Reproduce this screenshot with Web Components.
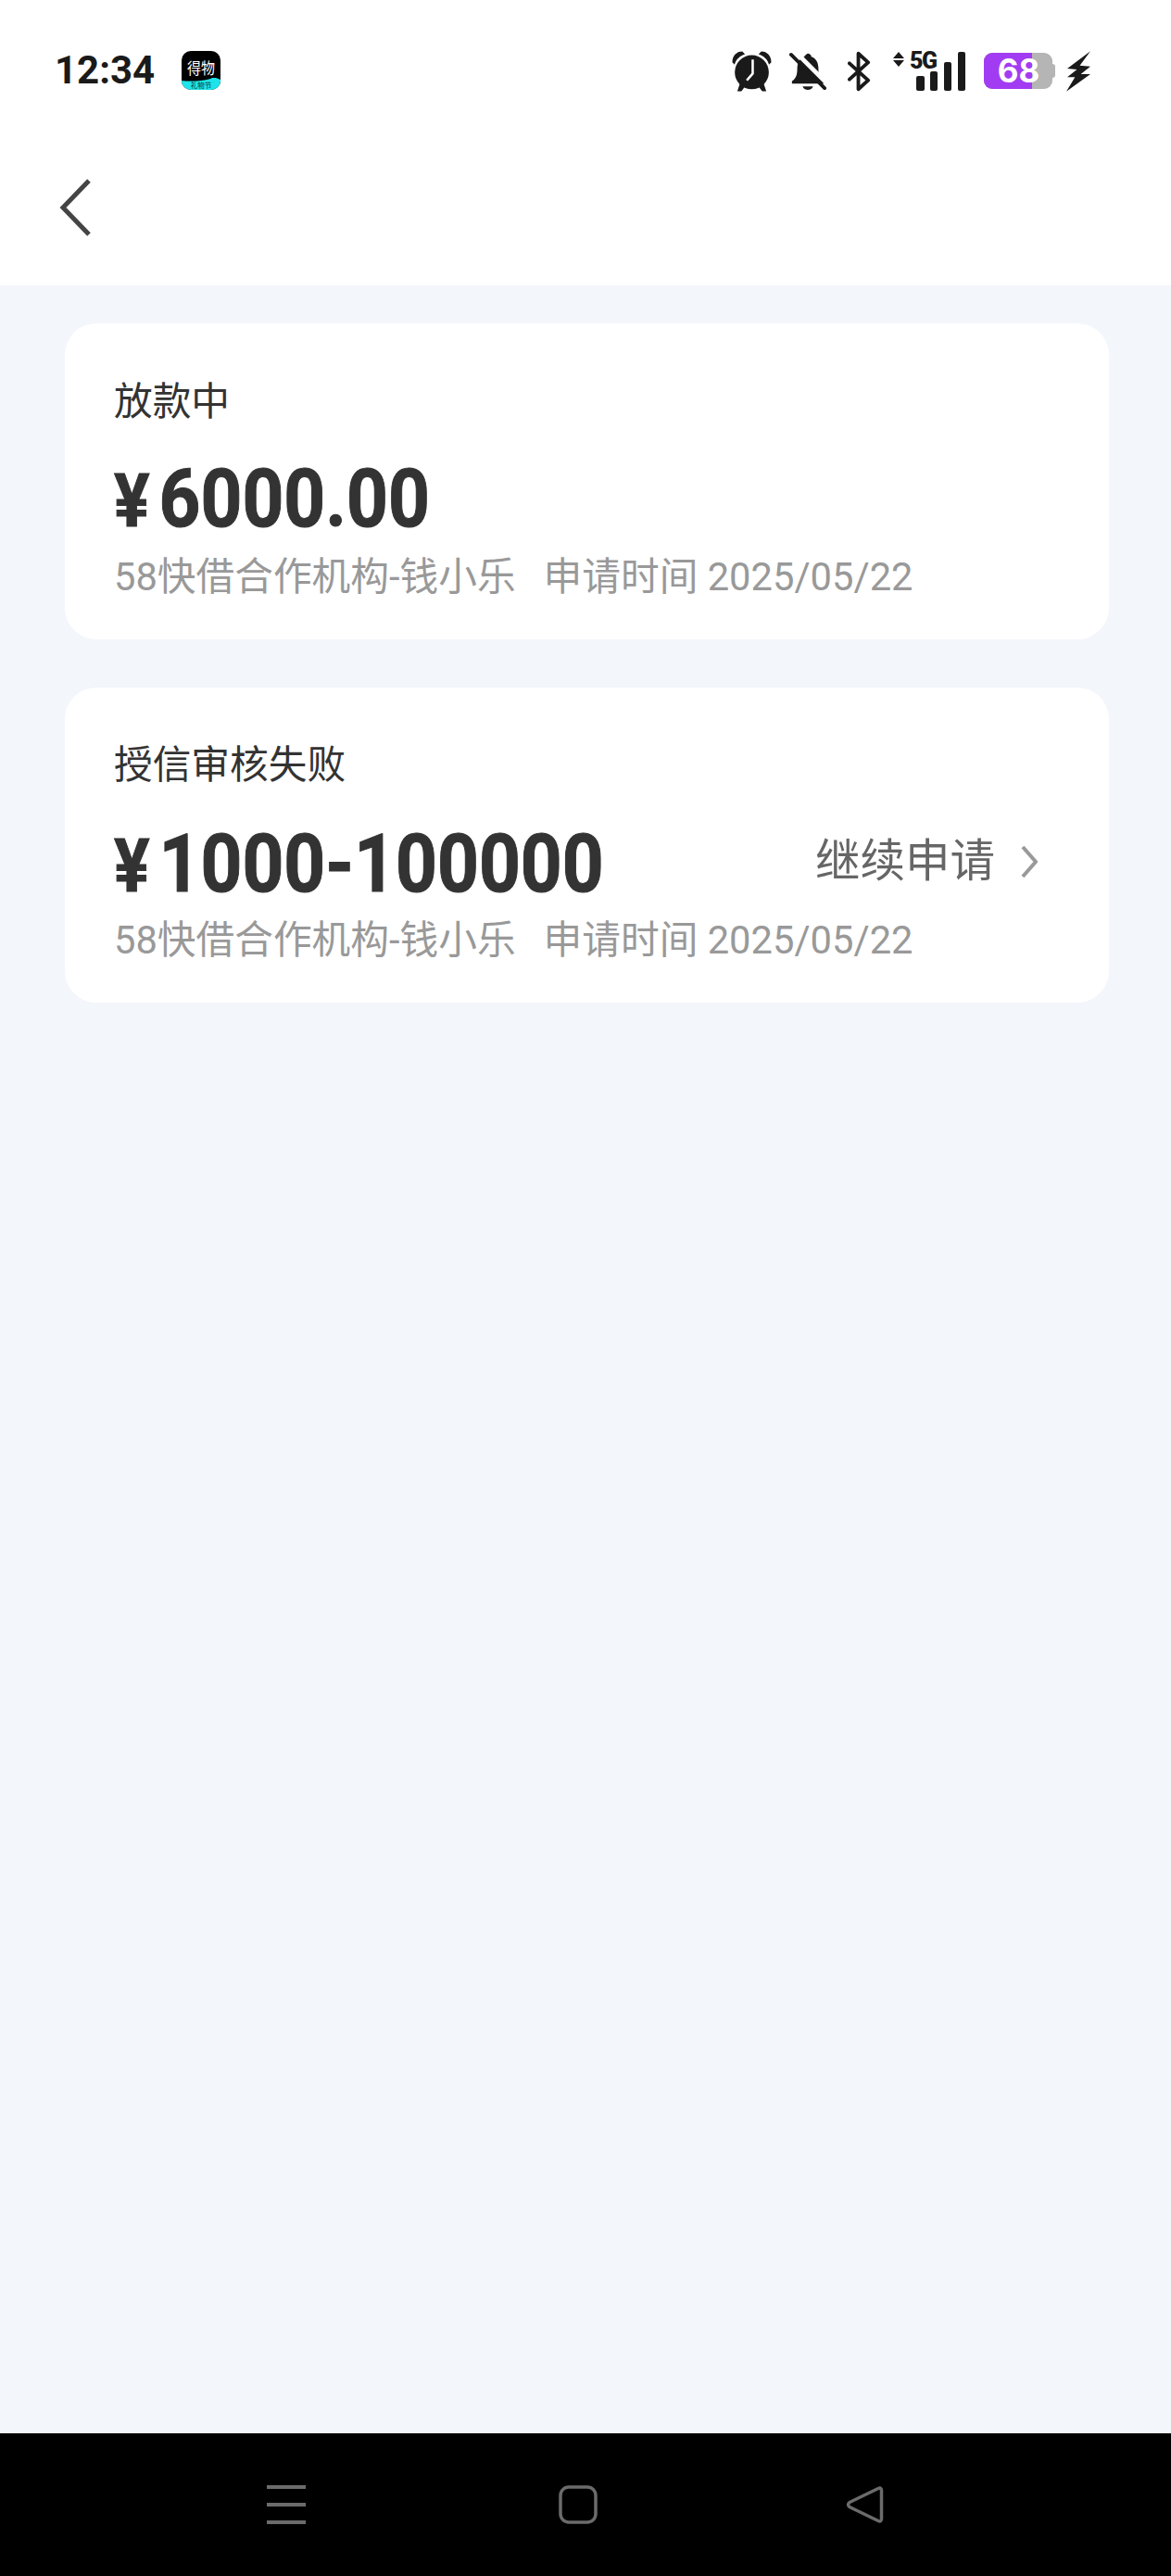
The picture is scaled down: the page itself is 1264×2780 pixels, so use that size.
<!DOCTYPE html>
<html lang="zh">
<head>
<meta charset="utf-8">
<title>申请记录</title>
<style>
    html, body { margin: 0; padding: 0; }
    body { font-family: Roboto, "Noto Sans CJK SC", sans-serif; }
</style>
</head>
<body>
<loan-page>
    <status-bar></status-bar>
    <back-header></back-header>
    <loan-list>
        <loan-card style="--card-top: 60px; --row-top: 47px; --meta-top: 26px; height: 341px">
            <span slot="title">放款中</span>
            <span slot="amount">6000.00</span>
            <span slot="org">58快借合作机构-钱小乐</span>
            <span slot="date">申请时间 2025/05/22</span>
        </loan-card>
        <loan-card>
            <span slot="title">授信审核失败</span>
            <span slot="amount">1000-100000</span>
            <span slot="action">继续申请</span>
            <span slot="org">58快借合作机构-钱小乐</span>
            <span slot="date">申请时间 2025/05/22</span>
        </loan-card>
    </loan-list>
    <system-nav></system-nav>
</loan-page>

<script>
class LoanPage extends HTMLElement {
    constructor() {
        super();
        this.attachShadow({ mode: 'open' });
        this.shadowRoot.innerHTML = `
            <style>
                :host {
                    display: flex;
                    flex-direction: column;
                    width: 1264px;
                    height: 2780px;
                    background: #f3f6fb;
                    overflow: hidden;
                }
            </style>
            <slot></slot>
        `;
    }
}

class StatusBar extends HTMLElement {
    constructor() {
        super();
        this.attachShadow({ mode: 'open' });
        this.shadowRoot.innerHTML = `
            <style>
                :host {
                    display: flex;
                    align-items: center;
                    height: 152px;
                    padding: 0 87px 0 59px;
                    box-sizing: border-box;
                    background: #fff;
                    color: #1a1a1a;
                }
                #time {
                    font: 700 42px/50px Roboto, sans-serif;
                    width: 137px;
                }
                #app {
                    display: block;
                    width: 42px;
                    height: 42px;
                }
                #icons {
                    display: flex;
                    align-items: center;
                    margin: 2px 0 0 auto;
                }
                svg { display: block; flex: none; }
            </style>
            <div id="time">12:34</div>
            <svg id="app" viewBox="0 0 42 42">
                <defs><clipPath id="r"><rect width="42" height="42" rx="10"/></clipPath></defs>
                <g clip-path="url(#r)">
                    <rect width="42" height="42" fill="#000"/>
                    <path d="M0 32 Q10 33 20 32 T33 29 L37 29 L42 31 V42 H0Z" fill="#1fe3ea"/>
                </g>
                <text x="6" y="24.5" textLength="30" lengthAdjust="spacingAndGlyphs" font-size="17" fill="#fff" font-family="'Noto Sans CJK SC', sans-serif">得物</text>
                <text x="21" y="39.5" text-anchor="middle" font-size="7.5" fill="#083a3c" font-family="'Noto Sans CJK SC', sans-serif">礼物节</text>
            </svg>
            <div id="icons">
                <svg width="43" height="46" viewBox="0 0 44 46">
                    <path d="M0.5 13 C0.5 6 5 1 11.5 1 L14.5 4 C9 6 4.5 9.5 3 15.5Z M43.5 13 C43.5 6 39 1 32.5 1 L29.5 4 C35 6 39.5 9.5 41 15.5Z" fill="#1a1a1a"/>
                    <path d="M9 36 L6 45 L10.5 45 L15 39Z M35 36 L38 45 L33.5 45 L29 39Z" fill="#1a1a1a"/>
                    <circle cx="22" cy="24" r="18.8" fill="#1a1a1a"/>
                    <path d="M23 10 V25.5 L16.5 33" fill="none" stroke="#fff" stroke-width="2.6"/>
                </svg>
                <svg width="40" height="42" viewBox="0 0 42 42" style="margin-left:19px">
                    <path d="M19 2 a3.5 3.5 0 0 1 6 2.5 C31 6.5 33 12 33 18 C33 25 34 29 39 33 V35 H3 V32 C8 29 9 24 9 18 C9 11 12 6 17 4.5 A3 3 0 0 1 19 2Z" fill="#1a1a1a"/>
                    <path d="M15 38 H27 C26 41 23 42 21 42 C19 42 16 41 15 38Z" fill="#1a1a1a"/>
                    <path d="M5 -3 L45 37" stroke="#fff" stroke-width="5"/>
                    <path d="M2 2 L40 40" stroke="#1a1a1a" stroke-width="4" stroke-linecap="round"/>
                </svg>
                <svg width="25" height="44" viewBox="0 0 26 44" style="margin-left:23px">
                    <path d="M2 13 L23 32 L12 42 V2 L23 12 L2 31" fill="none" stroke="#1a1a1a" stroke-width="4" stroke-linejoin="round" stroke-linecap="round"/>
                </svg>
                <svg width="78" height="50" viewBox="0 -6 78 50" style="margin:-6px 0 0 24px">
                    <path d="M6 1 L12 8 H0Z M0 10 H12 L6 17Z" fill="#1a1a1a"/>
                    <text x="18" y="19" font-family="Roboto, sans-serif" font-weight="900" font-size="25" letter-spacing="-1.5" fill="#1a1a1a">5G</text>
                    <rect x="25" y="27" width="9" height="16" rx="2" fill="#1a1a1a"/>
                    <rect x="40" y="22" width="8" height="21" rx="2" fill="#1a1a1a"/>
                    <rect x="55" y="12" width="8" height="31" rx="2" fill="#1a1a1a"/>
                    <rect x="70" y="1" width="8" height="42" rx="2" fill="#1a1a1a"/>
                </svg>
                <svg width="77" height="46" viewBox="0 -3 77 46" style="margin-left:20px">
                    <defs><clipPath id="b"><rect x="0" y="0" width="74" height="39" rx="9"/></clipPath></defs>
                    <rect x="0" y="0" width="74" height="39" rx="9" fill="#b5b5b5"/>
                    <rect x="0" y="0" width="52" height="39" fill="#a23cf2" clip-path="url(#b)"/>
                    <path d="M72 12 h2 a3 3 0 0 1 3 3 v9 a3 3 0 0 1 -3 3 h-2Z" fill="#b5b5b5"/>
                    <text x="37.5" y="32" text-anchor="middle" font-family="Inter, sans-serif" font-weight="700" font-size="35" fill="#fff">68</text>
                </svg>
                <svg width="26" height="46" viewBox="0 0 25 44" style="margin-left:12px">
                    <path d="M25 1 L1 19 L11 20 L1 28 L9 28 L0 43 L25 25 L15 25 L25 17 L14 16Z" fill="#1a1a1a"/>
                </svg>
            </div>
        `;
    }
}

class BackHeader extends HTMLElement {
    constructor() {
        super();
        this.attachShadow({ mode: 'open' });
        this.shadowRoot.innerHTML = `
            <style>
                :host {
                    display: flex;
                    align-items: center;
                    height: 156px;
                    padding: 0 0 0 64px;
                    box-sizing: border-box;
                    background: #fff;
                }
                svg { display: block; margin-top: -12px; }
            </style>
            <svg width="36" height="64" viewBox="0 0 36 64">
                <path d="M32 3 L4 32 L32 61" fill="none" stroke="#444" stroke-width="5"/>
            </svg>
        `;
    }
}

class LoanList extends HTMLElement {
    constructor() {
        super();
        this.attachShadow({ mode: 'open' });
        this.shadowRoot.innerHTML = `
            <style>
                :host {
                    display: flex;
                    flex: 1;
                    flex-direction: column;
                    gap: 52px;
                    padding: 41px 67px 0 70px;
                }
            </style>
            <slot></slot>
        `;
    }
}

class LoanCard extends HTMLElement {
    constructor() {
        super();
        this.attachShadow({ mode: 'open' });
        this.shadowRoot.innerHTML = `
            <style>
                :host {
                    display: block;
                    height: 340px;
                    padding: var(--card-top, 59px) 77px 0 53px;
                    box-sizing: border-box;
                    background: #fff;
                    border-radius: 34px;
                    font-family: Roboto, "Noto Sans CJK SC", sans-serif;
                }
                #title {
                    font-size: 41.7px;
                    line-height: 50px;
                    color: #333;
                }
                #row {
                    display: flex;
                    align-items: center;
                    height: 66px;
                    margin-top: var(--row-top, 49px);
                }
                #money {
                    flex: 1;
                    display: flex;
                    align-items: baseline;
                    color: #333;
                    font-weight: 700;
                    -webkit-text-stroke: 1px #333;
                    white-space: nowrap;
                    transform: scaleX(0.9);
                    transform-origin: left center;
                }
                #yen { font-size: 80px; line-height: 66px; width: 54px; }
                #value { font-size: 87px; line-height: 66px; }
                #action {
                    display: flex;
                    align-items: center;
                    gap: 28px;
                    margin-bottom: 6px;
                    font-size: 48.5px;
                    line-height: 60px;
                    color: #666;
                }
                #action.empty { display: none; }
                #meta {
                    display: flex;
                    gap: 30px;
                    margin-top: var(--meta-top, 24px);
                    font-size: 41.7px;
                    line-height: 50px;
                    color: #999;
                    white-space: nowrap;
                }
                svg { display: block; }
            </style>
            <div id="title"><slot name="title"></slot></div>
            <div id="row">
                <div id="money"><span id="yen">¥</span><span id="value"><slot name="amount"></slot></span></div>
                <div id="action">
                    <slot name="action"></slot>
                    <svg width="18" height="36" viewBox="0 0 18 36">
                        <path d="M2 2 L16 18 L2 34" fill="none" stroke="#999" stroke-width="4"/>
                    </svg>
                </div>
            </div>
            <div id="meta"><slot name="org"></slot><slot name="date"></slot></div>
        `;
    }

    connectedCallback() {
        if (!this.querySelector('[slot="action"]')) {
            this.shadowRoot.querySelector('#action').classList.add('empty');
        }
    }
}

class SystemNav extends HTMLElement {
    constructor() {
        super();
        this.attachShadow({ mode: 'open' });
        this.shadowRoot.innerHTML = `
            <style>
                :host {
                    display: flex;
                    align-items: center;
                    height: 154px;
                    padding: 0 0 0 288px;
                    box-sizing: border-box;
                    background: #000;
                }
                svg { display: block; flex: none; }
            </style>
            <svg width="42" height="42" viewBox="0 0 42 42">
                <path d="M0 2 H42 M0 21 H42 M0 40 H42" stroke="#6b6b6b" stroke-width="4"/>
            </svg>
            <svg width="42" height="42" viewBox="0 0 42 42" style="margin-left:273px">
                <rect x="2" y="2" width="38" height="38" rx="9" fill="none" stroke="#6b6b6b" stroke-width="3.5"/>
            </svg>
            <svg width="42" height="42" viewBox="0 0 42 42" style="margin-left:268px">
                <path d="M35 3.5 Q38.5 2 38.5 6 V36 Q38.5 40 35 38.5 L4 23.5 Q1 21 4 18.5Z" fill="none" stroke="#6b6b6b" stroke-width="3.5" stroke-linejoin="round"/>
            </svg>
        `;
    }
}

customElements.define('loan-page', LoanPage);
customElements.define('status-bar', StatusBar);
customElements.define('back-header', BackHeader);
customElements.define('loan-list', LoanList);
customElements.define('loan-card', LoanCard);
customElements.define('system-nav', SystemNav);
</script>
</body>
</html>
